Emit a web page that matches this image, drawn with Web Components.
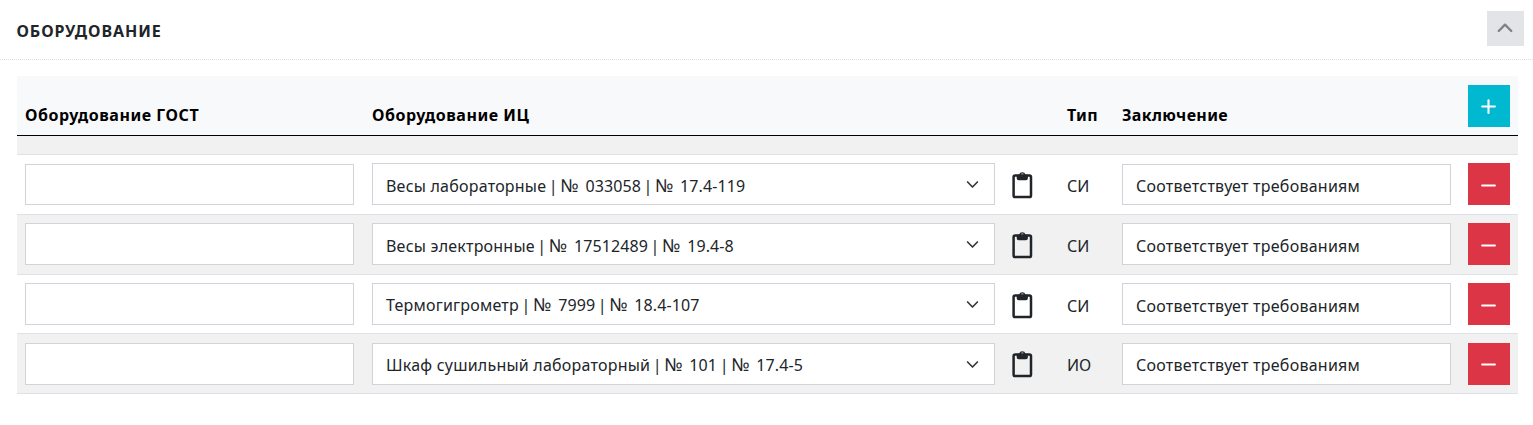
<!DOCTYPE html>
<html lang="ru">
<head>
<meta charset="utf-8">
<title>Оборудование</title>
<style>
html,body{margin:0;background:#fff}
body{font:16px/24px "Noto Sans","Open Sans",sans-serif;color:#212529}
</style>
</head>
<body>
<equipment-panel></equipment-panel>
<script>
const define = (name, html, setup) => customElements.define(name, class extends HTMLElement {
  constructor() {
    super();
    this.attachShadow({ mode: 'open' }).innerHTML = html;
  }
  connectedCallback() { if (setup) setup(this, this.shadowRoot); }
});

define('text-field', `<style>
:host{display:flex;align-items:flex-start;box-sizing:border-box;width:329px;height:42px;padding:var(--concl-top,10px) 13px 0;border:1px solid #ced4da;background:#fff;white-space:nowrap;letter-spacing:.25px}
:host([short]){height:41px;margin-top:1px}
</style><slot></slot>`);

define('select-field', `<style>
:host{display:flex;align-items:flex-start;justify-content:space-between;box-sizing:border-box;width:623px;height:42px;padding:var(--select-top,10px) 14px 0 13px;border:1px solid #ced4da;background:#fff;white-space:nowrap;letter-spacing:.22px}
svg{display:block;height:14px;margin-top:calc(14px - var(--select-top,10px))}
</style><span><slot></slot></span>
<svg width="14" height="14" viewBox="0 0 14 14" fill="none" stroke="#343a40" stroke-width="1.7" stroke-linecap="round" stroke-linejoin="round"><path d="M1.6 4l4.9 5 4.9-5"/></svg>`);

define('clipboard-icon', `<style>:host{display:block;width:21px;height:42px}svg{display:block}</style>
<svg width="21" height="42" viewBox="0 0 21 42"><rect x="1.6" y="12.5" width="17.4" height="21.6" rx="1.6" fill="none" stroke="#212529" stroke-width="2.5"/><path fill="#212529" fill-rule="evenodd" d="M4.7 11.8h2.4a3.3 3.3 0 0 1 6.4 0h2.4v3.4a2 2 0 0 1-2 2H6.7a2 2 0 0 1-2-2zM10.3 10.5a1.4 1.4 0 1 0 0 2.8 1.4 1.4 0 0 0 0-2.8z"/></svg>`);

define('square-button', `<style>
:host{display:block;width:42px;height:42px;background:#dc3545}
:host([kind=add]){background:#00b8d0}
svg{display:block;transform:translateY(var(--sign-shift,0))}
.v{display:none}:host([kind=add]) .v{display:inline}
:host([kind=add]) svg{transform:translateY(-1px)}
</style><svg width="42" height="42" viewBox="0 0 42 42" stroke="#fff" stroke-width="2.1" stroke-linecap="round"><path d="M14.2 22.5h12.7"/><path class="v" d="M20.5 16.2v12.7"/></svg>`);

define('collapse-button', `<style>:host{display:block;width:37px;height:35px;background:#e2e4e8}svg{display:block}</style>
<svg width="37" height="35" viewBox="0 0 37 35" fill="none" stroke="#7e8287" stroke-width="2.3" stroke-linecap="round" stroke-linejoin="round"><path d="M11.7 20l6.3-6.4 6.3 6.4"/></svg>`);

define('equipment-head', `<style>
:host{display:grid;grid-template-columns:347px 695px 55px 346px 42px;align-items:end;box-sizing:border-box;height:60px;padding:0 8px 8px;background:#f8f9fb;border-bottom:1px solid #000;color:#000;font-weight:700;white-space:nowrap}
span{display:block;letter-spacing:.54px}
.narrow{letter-spacing:.36px}
</style><span>Оборудование ГОСТ</span><span>Оборудование ИЦ</span><span class="narrow">Тип</span><span class="narrow">Заключение</span><square-button kind="add"></square-button>`);

define('equipment-row', `<style>
:host{display:grid;grid-template-columns:347px 640px 55px 55px 346px 42px;align-items:start;box-sizing:border-box;height:60px;padding:8px 8px 0;border-bottom:1px solid #dee2e6;background:#fff}
:host([striped]){background:#f1f1f1}
.type{line-height:24px;padding-top:calc(var(--concl-top,10px) + 1px)}
:host([short]) .type{padding-top:11px}
.bar{white-space:pre;margin:0 -1.9px}
.no{font-size:18px;line-height:1;margin-right:2.3px}
.num{letter-spacing:.1px}
clipboard-icon{transform:translateY(var(--icon-shift,0))}
</style><text-field></text-field><select-field></select-field><clipboard-icon></clipboard-icon><span class="type"></span><text-field><span>Соответствует требованиям</span></text-field><square-button></square-button>`,
(host, root) => {
  const [name, serial, inventory] = host.textContent.split(' | ');
  const number = text => `<span class="bar"> | </span><span class="no">№</span><span class="num"> ${text.slice(2)}</span>`;
  root.querySelector('select-field').innerHTML = name + number(serial) + number(inventory);
  root.querySelector('.type').textContent = host.getAttribute('type');
  if (host.hasAttribute('short')) root.querySelectorAll('text-field').forEach(f => f.setAttribute('short', ''));
});

define('equipment-panel', `<style>
:host{display:block}
header{display:flex;justify-content:space-between;align-items:flex-start;box-sizing:border-box;height:60px;padding:11px 9px 0 16.5px;border-bottom:1px dotted #dcdee2}
h2{margin:8px 0 0;font-size:16px;line-height:24px;font-weight:700;letter-spacing:.93px}
main{display:block;width:1501px;margin:16px 0 0 17px}
.spacer{height:18px;background:#f1f1f1;border-bottom:1px solid #dee2e6}
.first{--concl-top:9px}
.third{height:59px;--select-top:9px}
.fourth{padding-top:9px;--select-top:9px;--concl-top:9px;--icon-shift:-1px;--sign-shift:-1px}
</style>
<header><h2>ОБОРУДОВАНИЕ</h2><collapse-button></collapse-button></header>
<main><equipment-head></equipment-head><div class="spacer"></div>
<equipment-row class="first" short type="СИ">Весы лабораторные | № 033058 | № 17.4-119</equipment-row>
<equipment-row striped type="СИ">Весы электронные | № 17512489 | № 19.4-8</equipment-row>
<equipment-row class="third" type="СИ">Термогигрометр | № 7999 | № 18.4-107</equipment-row>
<equipment-row class="fourth" striped type="ИО">Шкаф сушильный лабораторный | № 101 | № 17.4-5</equipment-row>
</main>`);
</script>
</body>
</html>
